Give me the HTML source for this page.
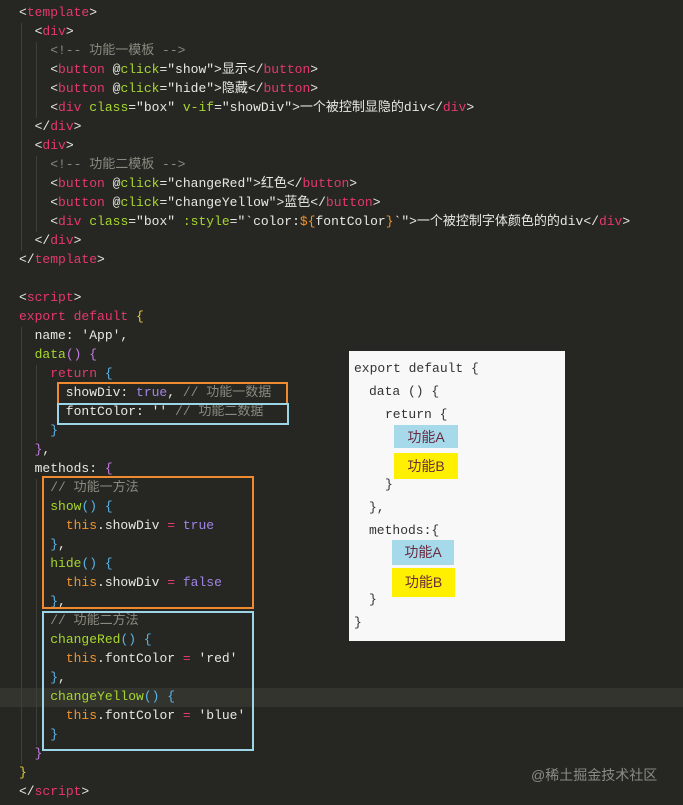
<!DOCTYPE html>
<html><head><meta charset="utf-8"><style>
body{margin:0;width:683px;height:805px;background:#262722;overflow:hidden;position:relative;font-family:"Liberation Mono","Noto Sans CJK SC",monospace;font-size:13px;color:#e8e8e2}
.l{position:absolute;left:19px;height:19px;line-height:19px;white-space:pre}
.t{color:#e5386e}.a{color:#a6d72e}.s{color:#e8e8e2}.c{color:#8a8a80}.k{color:#e5386e}.f{color:#a6d72e}.th{color:#f0932e}.p{color:#a184e6}.y{color:#e8c840}.v{color:#c47be0}.b{color:#5ab4e8}.g{color:#aaa}
.box{position:absolute;border:2px solid}
.hl{position:absolute;left:0;top:688px;width:683px;height:19px;background:#33342d}
.panel{position:absolute;left:349px;top:351px;width:216px;height:290px;background:#f8f8f8;font-size:13px;color:#333}
.panel div{position:absolute;white-space:pre}
.tag{position:absolute;font-family:"Liberation Sans","Noto Sans CJK SC",sans-serif;font-size:14px;text-align:center;line-height:24px;color:#6a2a40}
.guide{position:absolute;width:1px;background:#3e3f38}
</style></head><body>
<div class="hl"></div>
<div class="guide" style="left:21px;top:23px;height:228px"></div>
<div class="guide" style="left:36px;top:42px;height:76px"></div>
<div class="guide" style="left:36px;top:156px;height:76px"></div>
<div class="guide" style="left:21px;top:327px;height:437px"></div>
<div class="guide" style="left:36px;top:365px;height:76px"></div>
<div class="guide" style="left:36px;top:479px;height:266px"></div>
<div class="l" style="top:3px"><span class="s">&lt;</span><span class="t">template</span>&gt;</div>
<div class="l" style="top:22px">  &lt;<span class="t">div</span>&gt;</div>
<div class="l" style="top:41px"><span class="c">    &lt;!-- 功能一模板 --&gt;</span></div>
<div class="l" style="top:60px">    &lt;<span class="t">button</span> @<span class="a">click</span>="show"&gt;显示&lt;/<span class="t">button</span>&gt;</div>
<div class="l" style="top:79px">    &lt;<span class="t">button</span> @<span class="a">click</span>="hide"&gt;隐藏&lt;/<span class="t">button</span>&gt;</div>
<div class="l" style="top:98px">    &lt;<span class="t">div</span> <span class="a">class</span>="box" <span class="a">v-if</span>="showDiv"&gt;一个被控制显隐的div&lt;/<span class="t">div</span>&gt;</div>
<div class="l" style="top:117px">  &lt;/<span class="t">div</span>&gt;</div>
<div class="l" style="top:136px">  &lt;<span class="t">div</span>&gt;</div>
<div class="l" style="top:155px"><span class="c">    &lt;!-- 功能二模板 --&gt;</span></div>
<div class="l" style="top:174px">    &lt;<span class="t">button</span> @<span class="a">click</span>="changeRed"&gt;红色&lt;/<span class="t">button</span>&gt;</div>
<div class="l" style="top:193px">    &lt;<span class="t">button</span> @<span class="a">click</span>="changeYellow"&gt;蓝色&lt;/<span class="t">button</span>&gt;</div>
<div class="l" style="top:212px">    &lt;<span class="t">div</span> <span class="a">class</span>="box" <span class="a">:style</span>="`color:<span class="th">${</span>fontColor<span class="th">}</span>`"&gt;一个被控制字体颜色的的div&lt;/<span class="t">div</span>&gt;</div>
<div class="l" style="top:231px">  &lt;/<span class="t">div</span>&gt;</div>
<div class="l" style="top:250px">&lt;/<span class="t">template</span>&gt;</div>
<div class="l" style="top:288px">&lt;<span class="t">script</span>&gt;</div>
<div class="l" style="top:307px"><span class="k">export default</span> <span class="y">{</span></div>
<div class="l" style="top:326px">  name: 'App',</div>
<div class="l" style="top:345px">  <span class="f">data</span><span class="v">()</span> <span class="v">{</span></div>
<div class="l" style="top:364px">    <span class="k">return</span> <span class="b">{</span></div>
<div class="l" style="top:383px">      showDiv: <span class="p">true</span>, <span class="c">// 功能一数据</span></div>
<div class="l" style="top:402px">      fontColor: '' <span class="c">// 功能二数据</span></div>
<div class="l" style="top:421px">    <span class="b">}</span></div>
<div class="l" style="top:440px">  <span class="v">}</span>,</div>
<div class="l" style="top:459px">  methods: <span class="v">{</span></div>
<div class="l" style="top:478px"><span class="c">    // 功能一方法</span></div>
<div class="l" style="top:497px">    <span class="f">show</span><span class="b">()</span> <span class="b">{</span></div>
<div class="l" style="top:516px">      <span class="th">this</span>.showDiv <span class="k">=</span> <span class="p">true</span></div>
<div class="l" style="top:535px">    <span class="b">}</span>,</div>
<div class="l" style="top:554px">    <span class="f">hide</span><span class="b">()</span> <span class="b">{</span></div>
<div class="l" style="top:573px">      <span class="th">this</span>.showDiv <span class="k">=</span> <span class="p">false</span></div>
<div class="l" style="top:592px">    <span class="b">}</span>,</div>
<div class="l" style="top:611px"><span class="c">    // 功能二方法</span></div>
<div class="l" style="top:630px">    <span class="f">changeRed</span><span class="b">()</span> <span class="b">{</span></div>
<div class="l" style="top:649px">      <span class="th">this</span>.fontColor <span class="k">=</span> 'red'</div>
<div class="l" style="top:668px">    <span class="b">}</span>,</div>
<div class="l" style="top:687px">    <span class="f">changeYellow</span><span class="b">()</span> <span class="b">{</span></div>
<div class="l" style="top:706px">      <span class="th">this</span>.fontColor <span class="k">=</span> 'blue'</div>
<div class="l" style="top:725px">    <span class="b">}</span></div>
<div class="l" style="top:744px">  <span class="v">}</span></div>
<div class="l" style="top:763px"><span class="y">}</span></div>
<div class="l" style="top:782px">&lt;/<span class="t">script</span>&gt;</div>
<div class="box" style="left:57px;top:382px;width:227px;height:19px;border-color:#f08a30"></div>
<div class="box" style="left:57px;top:403px;width:228px;height:18px;border-color:#9cd6e6"></div>
<div class="box" style="left:42px;top:476px;width:208px;height:129px;border-color:#f08a30"></div>
<div class="box" style="left:42px;top:611px;width:208px;height:136px;border-color:#9cd6e6"></div>
<div class="panel">
<div style="left:5px;top:10px">export default {</div>
<div style="left:20px;top:33px">data () {</div>
<div style="left:36px;top:56px">return {</div>
<div class="tag" style="left:45px;top:74px;width:64px;height:23px;background:#a6d9ea">功能A</div>
<div class="tag" style="left:45px;top:102px;width:64px;height:26px;line-height:26px;background:#fff000">功能B</div>
<div style="left:36px;top:126px">}</div>
<div style="left:20px;top:149px">},</div>
<div style="left:20px;top:172px">methods:{</div>
<div class="tag" style="left:43px;top:189px;width:62px;height:25px;background:#a6d9ea">功能A</div>
<div class="tag" style="left:43px;top:217px;width:63px;height:29px;line-height:29px;background:#fff000">功能B</div>
<div style="left:20px;top:241px">}</div>
<div style="left:5px;top:264px">}</div>
</div>
<div style="position:absolute;left:531px;top:765px;font-family:'Liberation Sans','Noto Sans CJK SC',sans-serif;font-size:14px;color:#8a8a86">@稀土掘金技术社区</div>
</body></html>
